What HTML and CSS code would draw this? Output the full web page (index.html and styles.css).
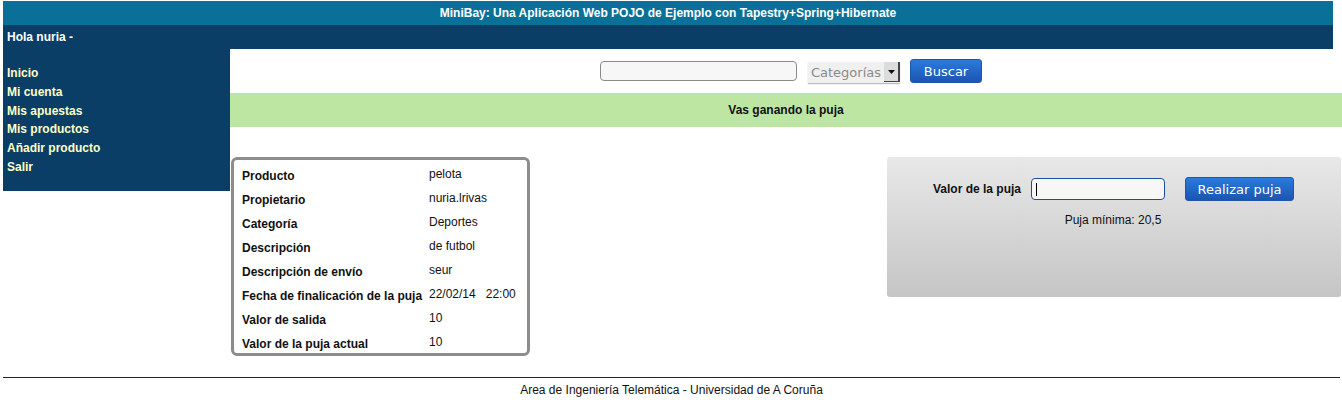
FILE: index.html
```html
<!DOCTYPE html>
<html lang="es">
<head>
<meta charset="utf-8">
<title>MiniBay</title>
<link rel="stylesheet" href="styles.css">
</head>
<body>
<div class="page">
  <div class="header">MiniBay: Una Aplicación Web POJO de Ejemplo con Tapestry+Spring+Hibernate</div>
  <div class="userbar">Hola nuria -</div>
  <div class="main">
    <nav class="sidebar">
      <a href="#">Inicio</a>
      <a href="#">Mi cuenta</a>
      <a href="#">Mis apuestas</a>
      <a href="#">Mis productos</a>
      <a href="#">Añadir producto</a>
      <a href="#">Salir</a>
    </nav>
    <div class="content">
      <div class="search">
        <div class="search-input"></div>
        <div class="select"><span class="select-text">Categorías</span><span class="select-arrow"><svg width="9" height="6" viewBox="0 0 9 6"><path d="M1 1h7L4.5 5z" fill="#111"/></svg></span></div>
        <div class="btn btn-search">Buscar</div>
      </div>
      <div class="notice">Vas ganando la puja</div>
      <div class="row">
        <div class="product">
          <div class="prow"><span class="plabel">Producto</span><span class="pval">pelota</span></div>
          <div class="prow"><span class="plabel">Propietario</span><span class="pval">nuria.lrivas</span></div>
          <div class="prow"><span class="plabel">Categoría</span><span class="pval">Deportes</span></div>
          <div class="prow"><span class="plabel">Descripción</span><span class="pval">de futbol</span></div>
          <div class="prow"><span class="plabel">Descripción de envío</span><span class="pval">seur</span></div>
          <div class="prow"><span class="plabel">Fecha de finalicación de la puja</span><span class="pval">22/02/14&nbsp;&nbsp;&nbsp;22:00</span></div>
          <div class="prow"><span class="plabel">Valor de salida</span><span class="pval">10</span></div>
          <div class="prow"><span class="plabel">Valor de la puja actual</span><span class="pval">10</span></div>
        </div>
        <div class="bid">
          <div class="bid-line">
            <span class="bid-label">Valor de la puja</span>
            <div class="bid-input"><span class="caret"></span></div>
            <div class="btn btn-bid">Realizar puja</div>
          </div>
          <div class="bid-min">Puja mínima: 20,5</div>
        </div>
      </div>
    </div>
  </div>
  <div class="footer">Area de Ingeniería Telemática - Universidad de A Coruña</div>
</div>
</body>
</html>
```
FILE: styles.css
```css
html, body {
  margin: 0;
  padding: 0;
  background: #fff;
}
body {
  font-family: "Liberation Sans", Arial, sans-serif;
  font-size: 12px;
  color: #111;
}
.page {
  padding: 1px 0 0 3px;
}
.header {
  width: 1330px;
  height: 24px;
  line-height: 24px;
  background: #0b7097;
  color: #fff;
  font-weight: bold;
  text-align: center;
}
.userbar {
  width: 1326px;
  height: 24px;
  line-height: 24px;
  padding-left: 4px;
  background: #0a3e66;
  color: #fff;
  font-weight: bold;
}
.main {
  display: flex;
  align-items: flex-start;
}
.sidebar {
  width: 227px;
  height: 127px;
  padding-top: 15px;
  background: #0a3e66;
  display: flex;
  flex-direction: column;
}
.sidebar a {
  color: #ffffc8;
  font-weight: bold;
  text-decoration: none;
  padding-left: 4px;
  line-height: 18.8px;
}
.content {
  width: 1112px;
}
.search {
  height: 44px;
  display: flex;
  align-items: center;
  justify-content: center;
  padding-left: 10px;
}
.search-input {
  width: 195px;
  height: 18px;
  border: 1px solid #8a8a8a;
  border-radius: 4px;
  background: #f7f7f7;
}
.select {
  margin-left: 11px;
  height: 21px;
  display: flex;
  align-items: center;
  background: #f0f0f0;
  box-shadow: 0 1px 1px #bbb;
  margin-top: 2px;
}
.select-text {
  font-family: "DejaVu Sans", sans-serif;
  font-size: 13px;
  color: #8a8a8a;
  padding: 0 3px;
}
.select-arrow {
  width: 14px;
  height: 19px;
  display: flex;
  align-items: center;
  justify-content: center;
  background: #dcdcdc;
  border-right: 2px solid #444;
  border-bottom: 1px solid #444;
}
.btn {
  font-family: "DejaVu Sans", sans-serif;
  font-size: 13px;
  color: #fff;
  background: linear-gradient(#2b7bdc, #1b55b0);
  border: 1px solid #1d57ad;
  border-radius: 3px;
  display: flex;
  align-items: center;
  justify-content: center;
  box-sizing: border-box;
}
.btn-search {
  width: 72px;
  height: 24px;
  margin-left: 10px;
}
.notice {
  height: 34px;
  line-height: 34px;
  background: #bee6a3;
  text-align: center;
  font-weight: bold;
}
.row {
  margin-top: 30px;
  display: flex;
  justify-content: space-between;
  align-items: flex-start;
}
.product {
  margin-left: 1px;
  width: 299px;
  height: 199px;
  box-sizing: border-box;
  border: 3px solid #8c8c8c;
  border-radius: 6px;
  padding: 5px 0 0 8px;
}
.prow {
  display: flex;
  height: 24px;
}
.plabel {
  width: 187px;
  font-weight: bold;
  padding-top: 4px;
}
.pval {
  padding-top: 2px;
}
.bid {
  width: 454px;
  height: 140px;
  margin-right: 1px;
  border-radius: 3px;
  background: linear-gradient(#e8e8e8, #c5c5c5);
  box-sizing: border-box;
  padding-top: 20px;
}
.bid-line {
  display: flex;
  align-items: center;
  padding-left: 46px;
}
.bid-label {
  font-weight: bold;
}
.bid-input {
  margin-left: 10px;
  width: 134px;
  height: 22px;
  box-sizing: border-box;
  border: 1px solid #1d4f99;
  border-radius: 4px;
  background: #f7f7f7;
  display: flex;
  align-items: center;
  padding-left: 4px;
}
.caret {
  width: 1px;
  height: 13px;
  background: #000;
}
.btn-bid {
  width: 109px;
  height: 24px;
  margin-left: 20px;
}
.bid-min {
  margin-top: 12px;
  text-align: center;
  text-indent: -2px;
}
.footer {
  margin-top: 21px;
  width: 1337px;
  border-top: 1px solid #222;
  text-align: center;
  padding-top: 5px;
  height: 20px;
  color: #111;
}
```
